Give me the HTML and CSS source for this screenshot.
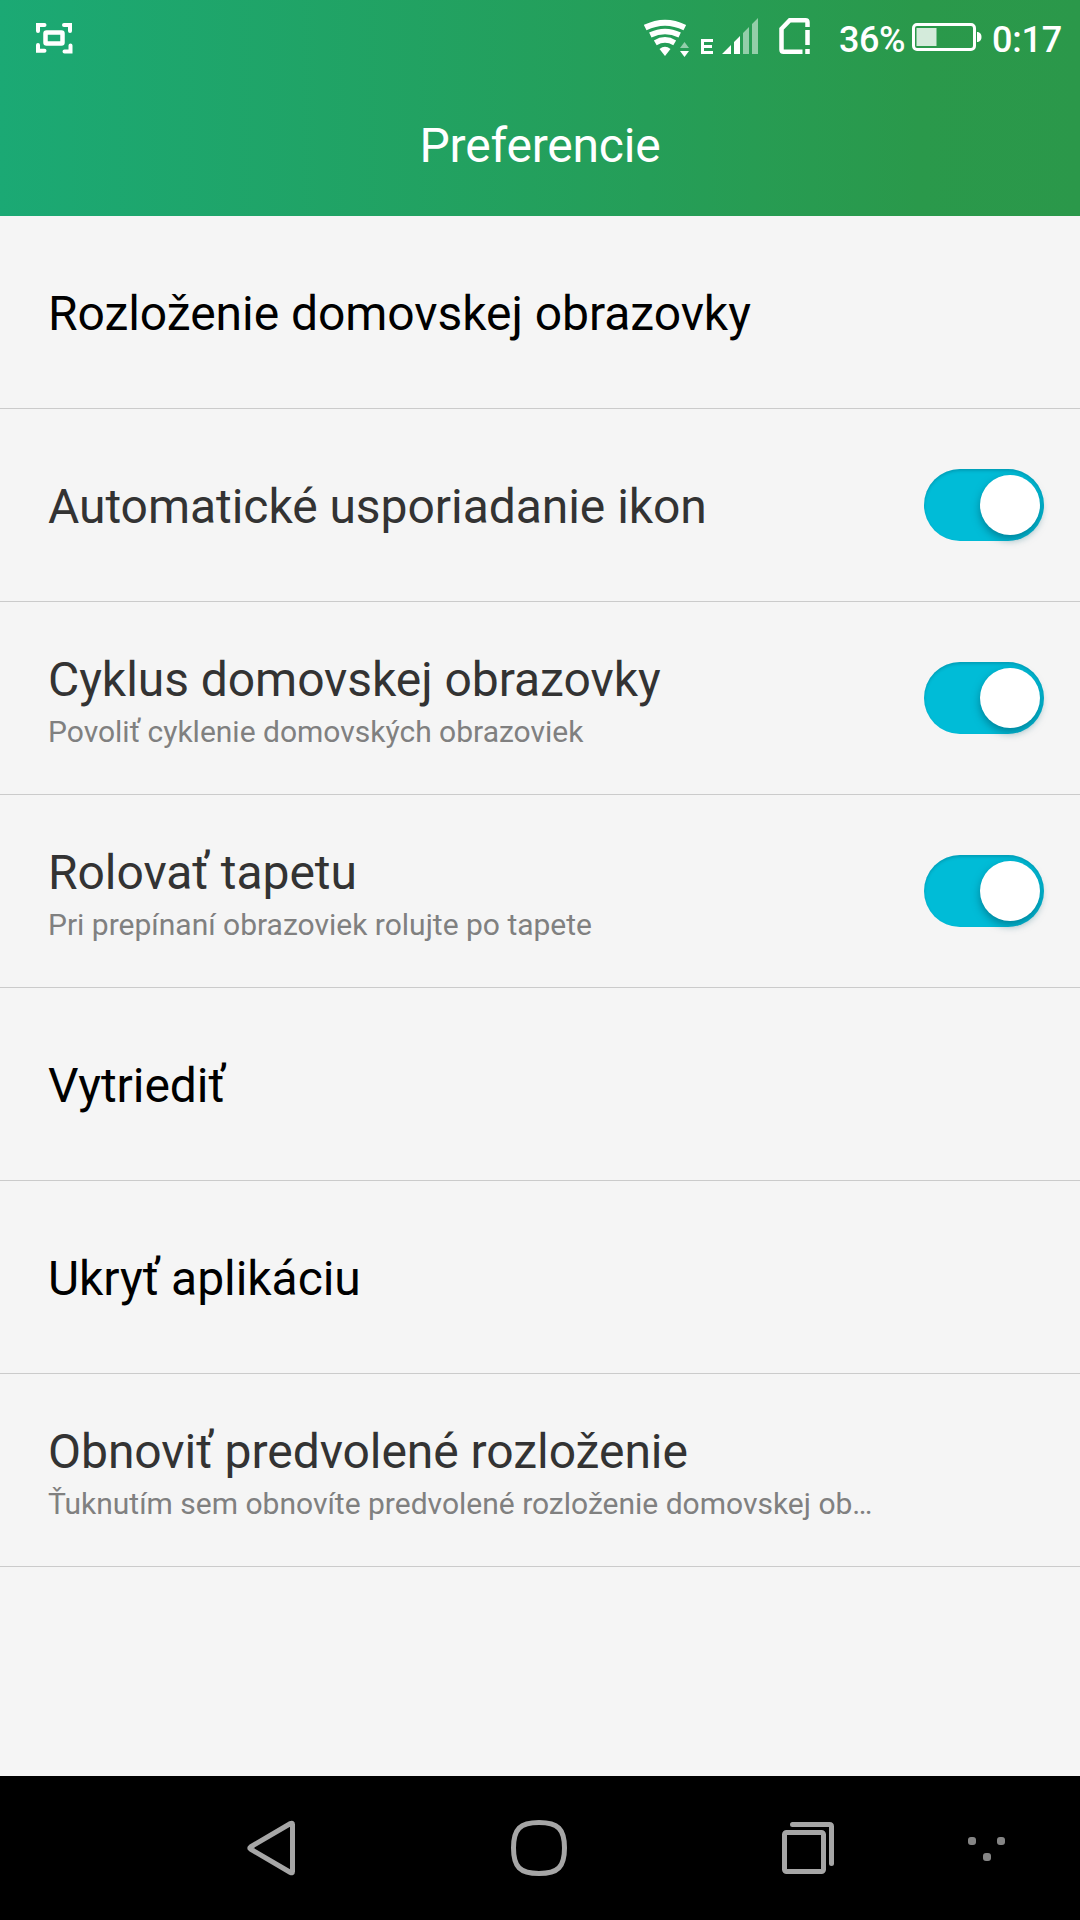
FILE: index.html
```html
<!DOCTYPE html>
<html lang="sk">
<head>
<meta charset="utf-8">
<title>Preferencie</title>
<link rel="stylesheet" href="styles.css">
</head>
<body>
<header class="header">
  <div class="status">
    <svg class="shot" width="40" height="34" viewBox="0 0 40 34" fill="none" stroke="#fff" stroke-width="4" stroke-linecap="round">
      <path d="M3 10V4H9.500M29 4h6v6M3 24v5.800h6.500M29.500 30.500h6v-6"/>
      <rect x="10.500" y="11.500" width="17" height="11" rx="1" stroke-width="4.500"/>
    </svg>
    <svg class="wifi" width="46" height="40" viewBox="0 0 46 40" fill="none" stroke="#fff">
      <path d="M1.200 9.600Q21 -.2 40.800 9.600" stroke-width="6"/>
      <path d="M6.300 17Q21 10 35.700 17" stroke-width="5.500"/>
      <path d="M11.300 24.800Q21 19 30.700 24.800" stroke-width="5.500"/>
      <path d="M15.500 31Q21 26.500 26.500 31L21 38z" fill="#fff" stroke="none"/>
      <path d="M36 30h9l-4.500-6z" fill="#fff" stroke="none" opacity=".5"/>
      <path d="M36 33h9l-4.500 6z" fill="#fff" stroke="none"/>
    </svg>
    <svg class="edge" width="12" height="15" viewBox="0 0 12 15" fill="none" stroke="#fff" stroke-width="3"><path d="M12 1.500H1.500v12H12M1.500 7.500H11"/></svg>
    <svg class="signal" width="36" height="36" viewBox="0 0 36 36" fill="#fff">
      <path d="M0 36h9v-9zM12 36h6V18l-6 6z"/>
      <path d="M21 36h6V9l-6 6zM30 36h6V0l-6 6z" opacity=".5"/>
    </svg>
    <svg class="sim" width="31" height="36" viewBox="0 0 31 36" fill="none" stroke="#fff" stroke-width="4.500">
      <path d="M28.500 9V4.300Q28.500 2.300 26.500 2.300H10.800L2.500 10.800V31.700Q2.500 33.700 4.500 33.700H23.500M28.500 12v15M28.500 31v5" />
    </svg>
    <span class="percent">36%</span>
    <svg class="battery" width="70" height="28" viewBox="0 0 70 28" fill="none">
      <rect x="1.500" y="1.500" width="61" height="25" rx="3.500" stroke="#fff" stroke-width="3"/>
      <rect x="4.500" y="5" width="20" height="18" fill="#fff" opacity=".8"/>
      <path d="M65 9h1q3.500 1 3.500 5t-3.500 5h-1z" fill="#fff"/>
    </svg>
    <span class="clock">0:17</span>
  </div>
  <h1 class="title">Preferencie</h1>
</header>
<main class="list">
  <div class="row"><div class="label strong">Rozloženie domovskej obrazovky</div></div>
  <div class="row"><div class="label">Automatické usporiadanie ikon</div><div class="toggle"><div class="knob"></div></div></div>
  <div class="row"><div class="text"><div class="label">Cyklus domovskej obrazovky</div><div class="note">Povoliť cyklenie domovských obrazoviek</div></div><div class="toggle"><div class="knob"></div></div></div>
  <div class="row"><div class="text"><div class="label">Rolovať tapetu</div><div class="note">Pri prepínaní obrazoviek rolujte po tapete</div></div><div class="toggle"><div class="knob"></div></div></div>
  <div class="row"><div class="label strong">Vytriediť</div></div>
  <div class="row"><div class="label strong">Ukryť aplikáciu</div></div>
  <div class="row"><div class="text"><div class="label">Obnoviť predvolené rozloženie</div><div class="note">Ťuknutím sem obnovíte predvolené rozloženie domovskej ob…</div></div></div>
</main>
<nav class="nav">
  <svg class="back" width="50" height="56" viewBox="0 0 50 56" fill="none" stroke="#a6a6a6" stroke-width="5" stroke-linejoin="round"><path d="M45.500 4.500Q45.500 2.500 43.500 3.500L3.500 27q-1.500 1 0 2L43.500 52.500q2 1 2-1z"/></svg>
  <svg class="home" width="56" height="56" viewBox="0 0 56 56" fill="none" stroke="#a6a6a6" stroke-width="5"><path d="M28 2.500C47 2.500 53.500 9 53.500 28S47 53.500 28 53.500 2.500 47 2.500 28 9 2.500 28 2.500z"/></svg>
  <svg class="recent" width="52" height="52" viewBox="0 0 52 52" fill="none" stroke="#a6a6a6" stroke-width="5" stroke-linecap="round"><rect x="2.500" y="10.500" width="39" height="39" rx="2"/><path d="M10.500 2.500H47.500q2 0 2 2V41.500"/></svg>
  <svg class="dots" width="37" height="24" viewBox="0 0 37 24" fill="#858585"><rect width="8" height="8" rx="3"/><rect x="29" width="8" height="8" rx="3"/><rect x="15" y="16" width="8" height="8" rx="3"/></svg>
</nav>
</body>
</html>
```
FILE: styles.css
```css
body {
  margin: 0;
  width: 1080px;
  height: 1920px;
  display: flex;
  flex-direction: column;
  background: #f5f5f5;
  font-family: Roboto, sans-serif;
  overflow: hidden;
}
.header {
  height: 216px;
  flex: none;
  background: linear-gradient(90deg, #1ba974, #259e58 60%, #2a994b 85%, #2b984a);
  color: #fff;
}
.status {
  height: 72px;
  display: flex;
  align-items: flex-start;
  font-size: 36px;
  line-height: 42px;
  font-weight: 500;
}
.status svg { flex: none; }
.shot { margin: 21px 0 0 35px; }
.wifi { margin: 18px 0 0 569px; }
.edge { margin: 39px 0 0 11px; }
.signal { margin: 18px 0 0 9px; }
.sim { margin: 18px 0 0 21px; }
.percent { margin: 19px 0 0 29px; width: 73px; letter-spacing: -0.5px; }
.battery { margin: 23px 0 0 0; }
.clock { margin: 19px 0 0 10px; letter-spacing: -0.2px; }
.title {
  margin: 0;
  padding-top: 46px;
  font-size: 48px;
  line-height: 56px;
  font-weight: 400;
  letter-spacing: -0.2px;
  text-align: center;
}
.list { flex: 1; }
.row {
  height: 192px;
  border-bottom: 1px solid #cbcbcb;
  display: flex;
  align-items: center;
  justify-content: space-between;
  padding: 0 36px 0 48px;
}
.label {
  padding-top: 4px;
  font-size: 48px;
  line-height: 56px;
  letter-spacing: -0.05px;
  color: #333;
  white-space: nowrap;
}
.strong { color: #000; }
.note {
  margin-top: 8px;
  font-size: 30px;
  line-height: 32px;
  color: #808080;
  white-space: nowrap;
}
.toggle {
  width: 120px;
  height: 72px;
  box-sizing: border-box;
  border-radius: 36px;
  background: #00bcd7;
  box-shadow: inset 0 2px 3px rgba(0, 70, 90, .25);
  padding: 6px 4px;
  display: flex;
  justify-content: flex-end;
}
.knob {
  width: 60px;
  height: 60px;
  border-radius: 50%;
  background: #fff;
  box-shadow: 0 4px 9px rgba(0, 90, 110, .6);
}
.nav {
  height: 144px;
  flex: none;
  background: #000;
  display: flex;
  align-items: flex-start;
}
.back { margin: 44px 0 0 247px; }
.home { margin: 44px 0 0 214px; }
.recent { margin: 46px 0 0 215px; }
.dots { margin: 61px 0 0 134px; }
```
